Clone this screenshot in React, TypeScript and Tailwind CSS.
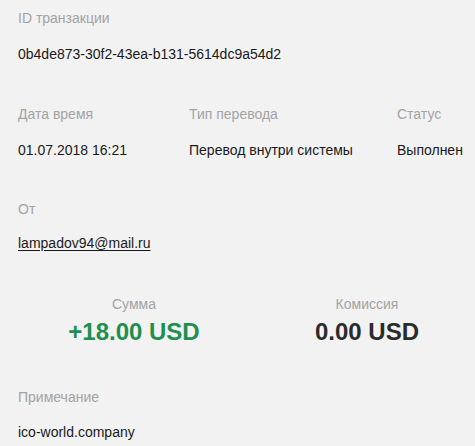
import React from "react";

export default function App() {
  return (
    <div className="w-[475px] h-[446px] overflow-hidden bg-[#f2f2f2] text-[14px] leading-[20px] text-[#1a1a1a]" style={{ fontFamily: '"Liberation Sans", Arial, sans-serif' }}>
      <div className="pl-[18px] pt-[8px]">
        <div className="text-[#a3a3a3]">ID транзакции</div>
        <div className="mt-[16px]">0b4de873-30f2-43ea-b131-5614dc9a54d2</div>

        <div className="mt-[40px] flex">
          <div className="w-[171px] shrink-0">
            <div className="text-[#a3a3a3]">Дата время</div>
            <div className="mt-[16px]">01.07.2018 16:21</div>
          </div>
          <div className="w-[208px] shrink-0">
            <div className="text-[#a3a3a3]">Тип перевода</div>
            <div className="mt-[16px]">Перевод внутри системы</div>
          </div>
          <div className="whitespace-nowrap">
            <div className="text-[#a3a3a3]">Статус</div>
            <div className="mt-[16px]">Выполнен</div>
          </div>
        </div>

        <div className="mt-[39px]">
          <div className="text-[#a3a3a3]">От</div>
          <div className="mt-[14px]">
            <a className="underline underline-offset-[2px]">lampadov94@mail.ru</a>
          </div>
        </div>

        <div className="mt-[41px] flex">
          <div className="w-[232px] shrink-0 flex flex-col items-center">
            <div className="text-[#a3a3a3]">Сумма</div>
            <div className="mt-[4px] text-[24px] leading-[28px] font-bold text-[#1e8f4e]">+18.00 USD</div>
          </div>
          <div className="w-[234px] shrink-0 flex flex-col items-center">
            <div className="text-[#a3a3a3]">Комиссия</div>
            <div className="mt-[4px] text-[24px] leading-[28px] font-bold text-[#2b2b2b]">0.00 USD</div>
          </div>
        </div>

        <div className="mt-[41px]">
          <div className="text-[#a3a3a3]">Примечание</div>
          <div className="mt-[15px]">ico-world.company</div>
        </div>
      </div>
    </div>
  );
}
